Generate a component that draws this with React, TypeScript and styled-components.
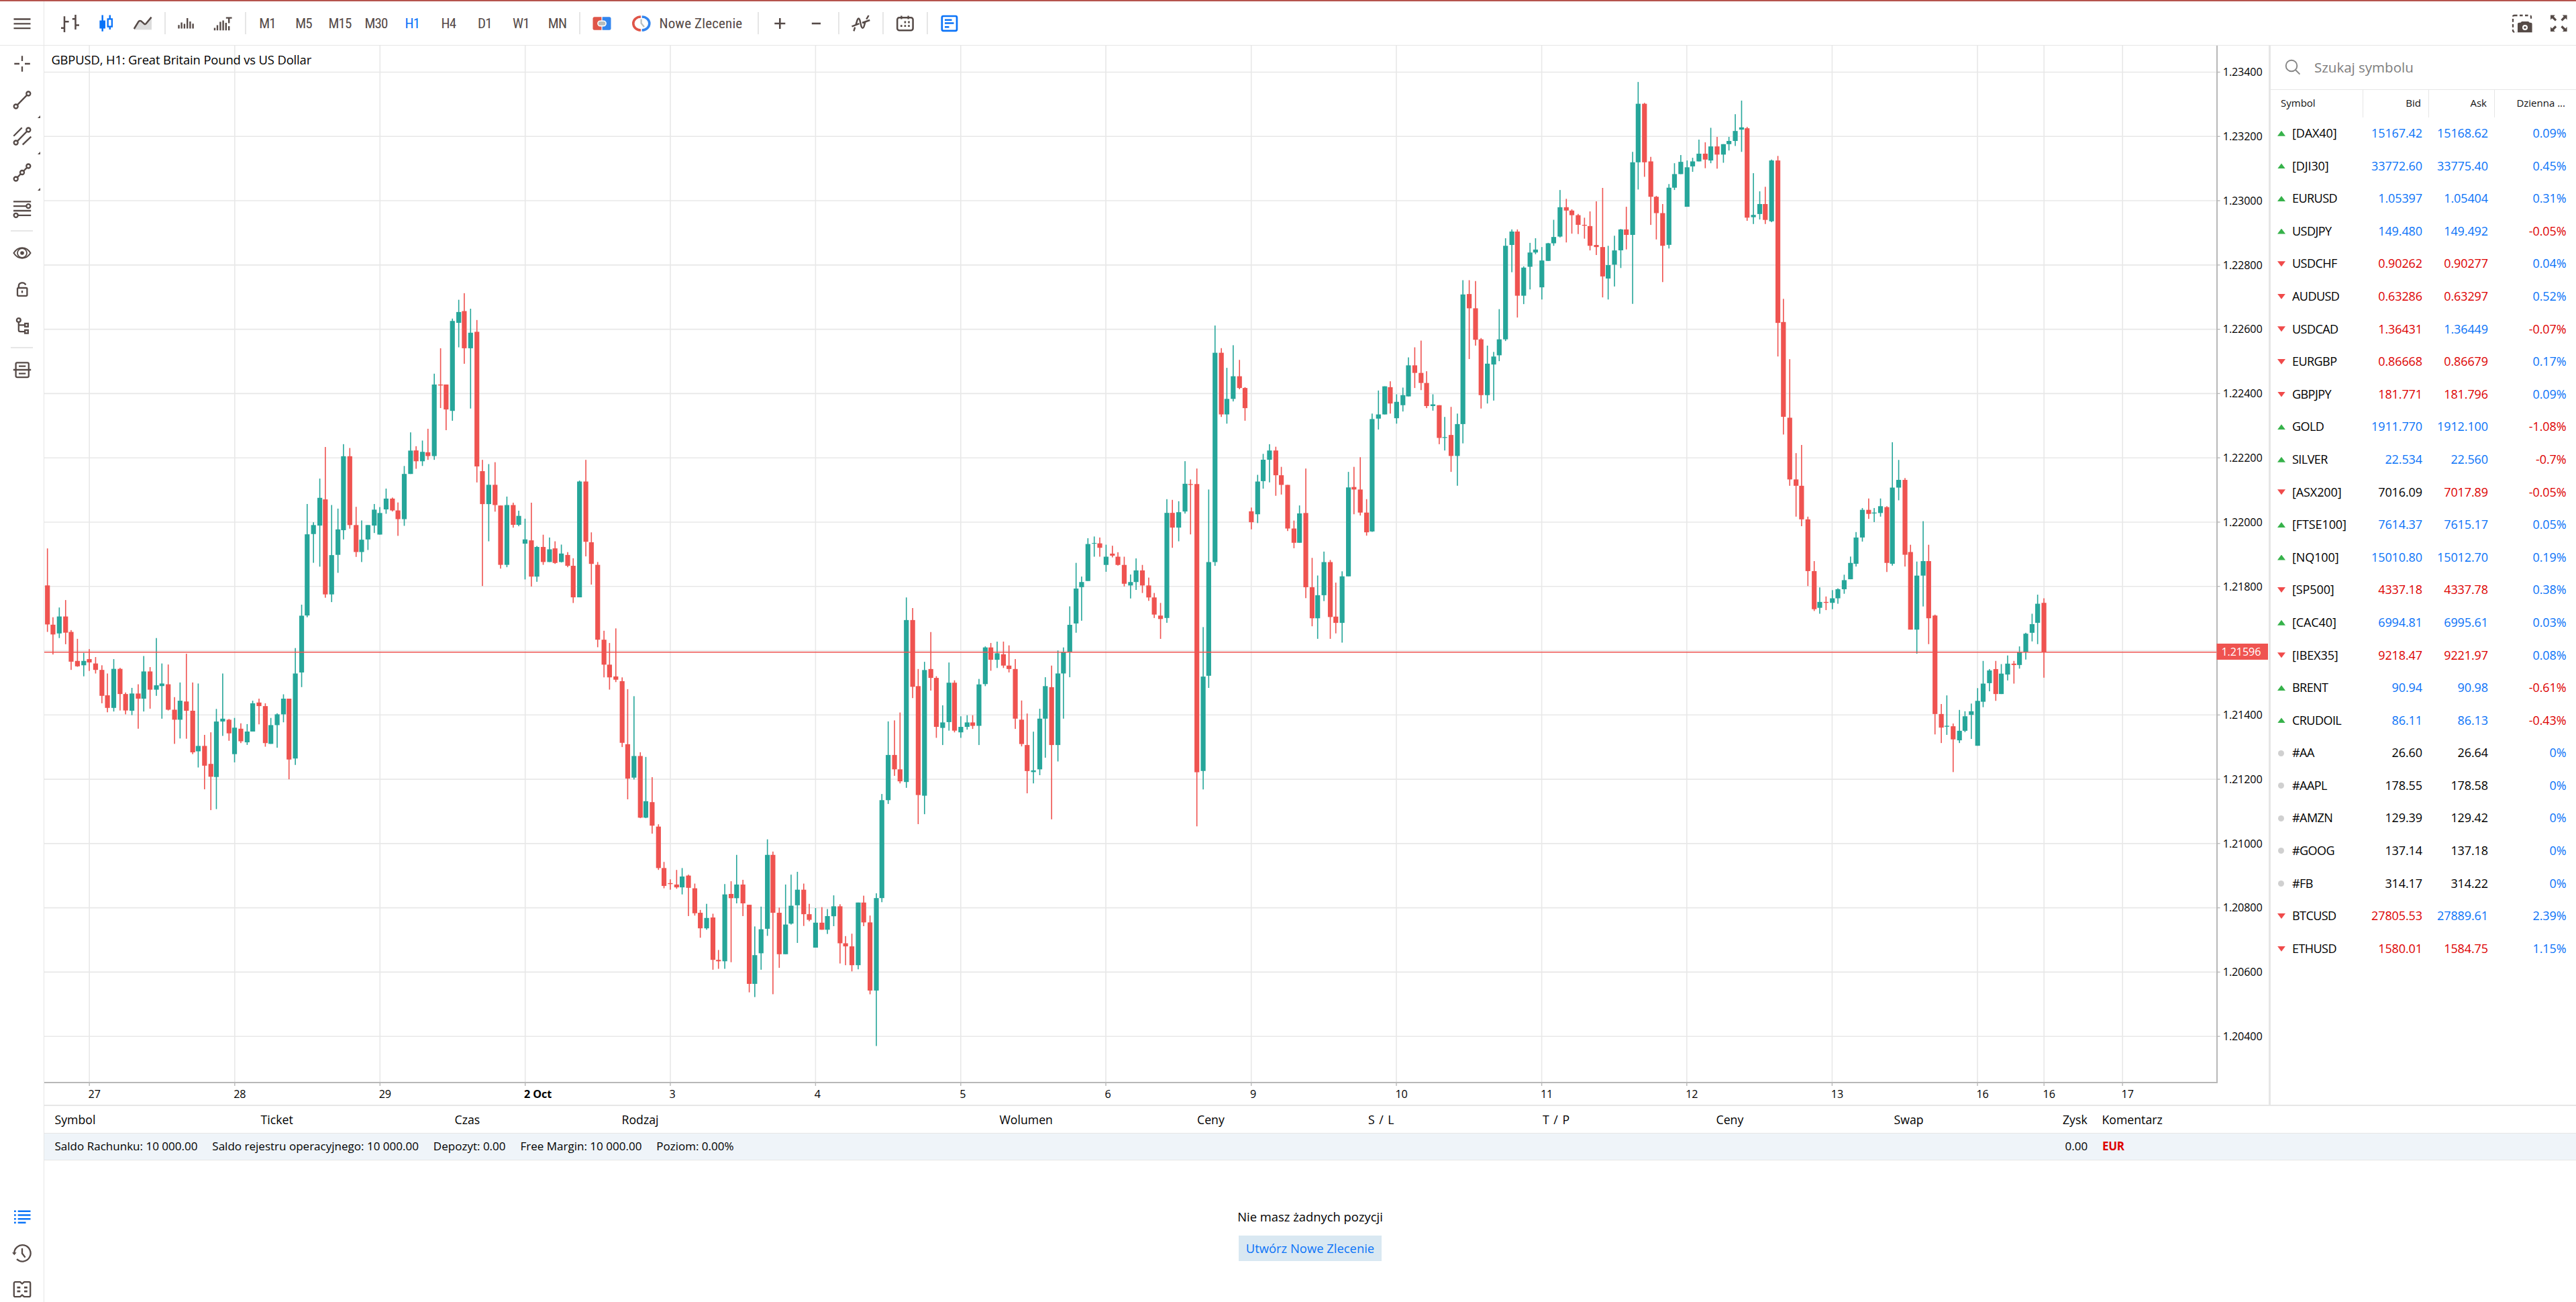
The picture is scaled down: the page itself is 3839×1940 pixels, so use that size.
import React from "react";
import styled, { createGlobalStyle } from "styled-components";

const color = {
  ink: "#554a47",
  blue: "#0a73f8",
  red: "#dd0000",
  up: "#26a69a",
  down: "#ef5350",
  line: "#e6e6e6",
  axis: "#b8b8b8",
};

const GlobalStyle = createGlobalStyle`
  html, body {
    margin: 0;
    background: #fff;
  }

  body {
    font-family: "Open Sans", "Noto Sans", sans-serif;
    color: #000;
    overflow: hidden;
  }
`;

const Page = styled.div`
  display: flex;
  box-sizing: border-box;
  width: 3839px;
  height: 1940px;
  border-top: 2px solid #b5534e;
  overflow: hidden;
`;

const SideBar = styled.nav`
  display: flex;
  flex-direction: column;
  flex: none;
  box-sizing: border-box;
  width: 66px;
  border-right: 1px solid ${color.line};
`;

const MenuCell = styled.div`
  display: flex;
  flex: none;
  align-items: center;
  justify-content: center;
  box-sizing: border-box;
  height: 66px;
  border-bottom: 1px solid ${color.line};
`;

const SideButton = styled.div<{ $menu?: boolean }>`
  position: relative;
  display: flex;
  flex: none;
  align-items: center;
  justify-content: center;
  height: 54px;

  &:after {
    content: "";
    display: ${(props) => (props.$menu ? "block" : "none")};
    position: absolute;
    right: 5px;
    bottom: 0;
    border-left: 4px solid transparent;
    border-bottom: 4px solid ${color.ink};
  }
`;

const SideLine = styled.div`
  flex: none;
  width: 33px;
  height: 2px;
  margin: 5px 16px;
  background: ${color.line};
`;

const SideBottom = styled.div`
  margin: auto 0 -8px;
`;

const Content = styled.div`
  display: flex;
  flex-direction: column;
  flex: 1;
`;

const Toolbar = styled.header`
  display: flex;
  flex: none;
  align-items: center;
  box-sizing: border-box;
  height: 66px;
  padding-left: 11.5px;
  border-bottom: 1px solid ${color.line};
`;

const ToolButton = styled.div<{ $active?: boolean }>`
  display: flex;
  flex: none;
  align-items: center;
  justify-content: center;
  width: 54px;
  font: 370 21px/54px Roboto, sans-serif;
  font-stretch: 75%;
  letter-spacing: -0.8px;
  color: ${(props) => (props.$active ? color.blue : color.ink)};
`;

const OrderButton = styled(ToolButton)`
  justify-content: flex-start;
  box-sizing: border-box;
  width: 200px;
  padding-left: 18px;
  gap: 13px;
  letter-spacing: 0.15px;
`;

const ToolLine = styled.div`
  flex: none;
  width: 2px;
  height: 33px;
  margin: 0 5px;
  background: ${color.line};
`;

const ToolSpace = styled.div`
  flex: 1;
`;

const Main = styled.main`
  display: flex;
  flex: none;
  height: 1578px;
`;

const Quotes = styled.aside`
  flex: 1;
  border-left: 3px solid ${color.line};
`;

const Search = styled.div`
  display: flex;
  align-items: center;
  box-sizing: border-box;
  height: 66px;
  padding: 0 0 1px 21px;
  gap: 20px;
  border-bottom: 1px solid ${color.line};
  font-size: 20.5px;
  color: #7d7d7d;
`;

const QuoteGrid = styled.div`
  display: grid;
  grid-template-columns: 138px 98px 98px 1fr;
`;

const QuoteHead = styled(QuoteGrid)`
  height: 41px;
  font-size: 15px;
  line-height: 38px;
  color: #111;
`;

const HeadCell = styled.div<{ $first?: boolean; $last?: boolean }>`
  padding-left: ${(props) => (props.$first ? "15px" : "0")};
  padding-right: ${(props) => (props.$last ? "16px" : "11px")};
  text-align: ${(props) => (props.$first ? "left" : "right")};
  border-right: ${(props) => (props.$last ? "0" : `1px solid ${color.line}`)};
`;

const QuoteRow = styled(QuoteGrid)`
  height: 48.6px;
  font-size: 18px;
  line-height: 47.6px;
`;

const QuoteName = styled.div<{ $index: boolean }>`
  display: flex;
  align-items: center;
  padding: 0 0 2px 10px;
  gap: 10px;
  letter-spacing: ${(props) => (props.$index ? "-0.1px" : "-0.55px")};
`;

const Value = styled.div<{ $tone: string; $last?: boolean }>`
  padding-right: ${(props) => (props.$last ? "14.5px" : "10px")};
  text-align: right;
  letter-spacing: -0.1px;
  color: ${(props) => tones[props.$tone]};
`;

const Trend = styled.i<{ $dir: string }>`
  flex: none;
  box-sizing: border-box;
  width: ${(props) => (props.$dir === "n" ? "9px" : "12px")};
  height: ${(props) => (props.$dir === "n" ? "9px" : "8px")};
  margin: ${(props) => (props.$dir === "n" ? "0 2px 0 1px" : "0")};
  border-radius: ${(props) => (props.$dir === "n" ? "50%" : "0")};
  background: ${(props) => trendColor[props.$dir]};
  clip-path: ${(props) => trendShape[props.$dir]};
`;

const Positions = styled.section`
  flex: 1;
  border-top: 2px solid ${color.line};
`;

const PositionHead = styled.div`
  display: grid;
  grid-template-columns: 307px 289px 249px 563px 294.5px 255px 260px 258.5px 265px 251.5px 58.5px 1fr;
  height: 40px;
  padding-left: 15.5px;
  border-bottom: 1px solid ${color.line};
  font-size: 17.7px;
  line-height: 40px;
  word-spacing: 2px;
`;

const Summary = styled.div`
  display: flex;
  height: 39px;
  padding-left: 15.5px;
  gap: 21.8px;
  border-bottom: 1px solid ${color.line};
  background: #eff4f9;
  font-size: 17.05px;
  line-height: 38px;
`;

const Profit = styled.span`
  margin-left: auto;
`;

const Currency = styled.b`
  width: 706px;
  color: ${color.red};
  letter-spacing: -0.3px;
`;

const Empty = styled.div`
  display: flex;
  flex-direction: column;
  align-items: center;
  padding-top: 72px;
  font-size: 18.4px;
  line-height: 24px;
`;

const CreateOrder = styled.div`
  width: 213px;
  margin-top: 16px;
  background: #d9e8f2;
  color: ${color.blue};
  line-height: 38px;
  text-align: center;
`;

const Svg = styled.svg<{ $active?: boolean }>`
  flex: none;
  overflow: visible;
  fill: none;
  stroke: ${(props) => (props.$active ? color.blue : color.ink)};
  stroke-width: 2.3;
`;

const ChartSvg = styled.svg`
  flex: none;
  display: block;
  font-family: "Open Sans", "Noto Sans", sans-serif;
`;

const tones: Record<string, string> = {
  b: color.blue,
  r: color.red,
  k: "#000",
};

const trendColor: Record<string, string> = {
  u: "#36b24a",
  d: "#f04a4a",
  n: "#d0d0d0",
};

const trendShape: Record<string, string> = {
  u: "polygon(50% 0, 100% 100%, 0 100%)",
  d: "polygon(0 0, 100% 0, 50% 100%)",
  n: "none",
};

// trend, symbol, bid, ask, daily change, tone of each value
const quotes = [
  ["u", "[DAX40]", "15167.42", "15168.62", "0.09%", "bbb"],
  ["u", "[DJI30]", "33772.60", "33775.40", "0.45%", "bbb"],
  ["u", "EURUSD", "1.05397", "1.05404", "0.31%", "bbb"],
  ["u", "USDJPY", "149.480", "149.492", "-0.05%", "bbr"],
  ["d", "USDCHF", "0.90262", "0.90277", "0.04%", "rrb"],
  ["d", "AUDUSD", "0.63286", "0.63297", "0.52%", "rrb"],
  ["d", "USDCAD", "1.36431", "1.36449", "-0.07%", "rbr"],
  ["d", "EURGBP", "0.86668", "0.86679", "0.17%", "rrb"],
  ["d", "GBPJPY", "181.771", "181.796", "0.09%", "rrb"],
  ["u", "GOLD", "1911.770", "1912.100", "-1.08%", "bbr"],
  ["u", "SILVER", "22.534", "22.560", "-0.7%", "bbr"],
  ["d", "[ASX200]", "7016.09", "7017.89", "-0.05%", "krr"],
  ["u", "[FTSE100]", "7614.37", "7615.17", "0.05%", "bbb"],
  ["u", "[NQ100]", "15010.80", "15012.70", "0.19%", "bbb"],
  ["d", "[SP500]", "4337.18", "4337.78", "0.38%", "rrb"],
  ["u", "[CAC40]", "6994.81", "6995.61", "0.03%", "bbb"],
  ["d", "[IBEX35]", "9218.47", "9221.97", "0.08%", "rrb"],
  ["u", "BRENT", "90.94", "90.98", "-0.61%", "bbr"],
  ["u", "CRUDOIL", "86.11", "86.13", "-0.43%", "bbr"],
  ["n", "#AA", "26.60", "26.64", "0%", "kkb"],
  ["n", "#AAPL", "178.55", "178.58", "0%", "kkb"],
  ["n", "#AMZN", "129.39", "129.42", "0%", "kkb"],
  ["n", "#GOOG", "137.14", "137.18", "0%", "kkb"],
  ["n", "#FB", "314.17", "314.22", "0%", "kkb"],
  ["d", "BTCUSD", "27805.53", "27889.61", "2.39%", "rbb"],
  ["d", "ETHUSD", "1580.01", "1584.75", "1.15%", "rrb"],
];

const periods = ["M1", "M5", "M15", "M30", "H1", "H4", "D1", "W1", "MN"];

const positionColumns = [
  "Symbol",
  "Ticket",
  "Czas",
  "Rodzaj",
  "Wolumen",
  "Ceny",
  "S / L",
  "T / P",
  "Ceny",
  "Swap",
  "Zysk",
  "Komentarz",
];

const summary = [
  "Saldo Rachunku: 10 000.00",
  "Saldo rejestru operacyjnego: 10 000.00",
  "Depozyt: 0.00",
  "Free Margin: 10 000.00",
  "Poziom: 0.00%",
];

const days: Array<[number, string, boolean?]> = [
  [133.2, "27"],
  [349.8, "28"],
  [566.3, "29"],
  [782.7, "2 Oct", true],
  [999, "3"],
  [1215.4, "4"],
  [1431.8, "5"],
  [1648, "6"],
  [1864.7, "9"],
  [2081, "10"],
  [2297.6, "11"],
  [2513.8, "12"],
  [2730.4, "13"],
  [2947, "16"],
  [3046.2, "16"],
  [3163.2, "17"],
];

const prices = Array.from({ length: 16 }, (_, i) => ({
  label: (1.234 - i * 0.002).toFixed(5),
  y: 107.5 + i * 95.78,
}));

// Hourly bars, split into runs that share a base and a step.
// Each bar: direction, high, body top, body bottom, low.
const runs = [
  {
    base: 640,
    step: 0.38265,
    bars:
      "r463,607,759,788 r731,760,798,876 g693,728,794,812 r664,728,791,836 r781,788,904,936 r815,901,922,924 g870,901,918,961 r855,894,907,940 r886,911,936,950 r918,936,1037,1066 " +
      "r950,1035,1084,1101 g894,932,1084,1098 r928,932,1030,1094 r1024,1030,1094,1109 g1006,1028,1095,1112 r992,1028,1048,1165 g882,942,1048,1098 r925,942,1013,1087 g812,996,1013,1037 g911,989,999,1126 " +
      "r915,992,1091,1094 r1042,1091,1130,1224 g985,1056,1130,1203 r873,1059,1095,1204 r985,1095,1257,1264 g989,1232,1253,1316 r1189,1232,1309,1401 r1179,1302,1352,1482 g1088,1137,1353,1478 g950,1126,1137,1193 " +
      "r1127,1130,1183,1212 g1123,1161,1264,1296 r1144,1165,1214,1221 g1147,1176,1218,1228 g1056,1066,1176,1176 r1048,1063,1077,1148 r1066,1077,1221,1235 g1123,1151,1224,1224 g1105,1109,1151,1239 g1031,1048,1109,1140 " +
      "r1048,1048,1285,1362 g851,950,1281,1306 g682,725,946,1003 g290,408,724,731 g361,372,407,519 g191,266,374,534 r68,272,642,655 g294,489,642,672 g308,389,488,558 g57,104,392,428 " +
      "r72,104,372,386 r301,372,477,496 g354,429,477,516 g372,372,428,469 g290,312,374,403 g302,325,409,409 g230,269,311,328 r265,269,315,319 r284,315,349,414 g142,173,349,375 g11,82,173,173",
  },
  {
    base: 420,
    step: 0.70153,
    bars:
      "r349,358,381,397 g337,361,381,391 r312,362,370,378 g195,218,370,378 r141,218,220,268 r218,218,271,315 g78,83,274,295 g38,64,87,139 r24,62,141,174 g57,108,141,269 " +
      "r81,106,392,426 r378,402,472,646 g387,431,472,551 r383,431,474,488 r475,475,601,609 g456,474,601,606 r469,474,516,522 g486,497,516,519 g503,547,556,632 r469,549,626,647 " +
      "g561,563,626,637 r537,563,595,601 g543,568,595,595 r551,566,597,599 g558,577,595,596 r574,580,603,606 r587,603,670,682 g422,424,670,670 r378,424,552,583 r532,553,599,643 " +
      "r595,601,760,776 r741,760,813,840 r767,813,840,866 r736,838,845,850 r840,848,979,988 r865,982,1055,1099 g880,1007,1053,1057 r999,1007,1138,1139 g1009,1103,1138,1139 r1052,1105,1155,1172 " +
      "r1152,1157,1245,1249 r1232,1245,1283,1288 r1269,1277,1279,1291 r1249,1280,1286,1289 g1245,1263,1286,1301 r1259,1261,1287,1347 r1278,1288,1341,1346 r1334,1340,1373,1393 g1321,1351,1373,1376 r1342,1350,1440,1461 " +
      "r1419,1440,1443,1459 g1279,1301,1443,1459 r1273,1300,1309,1445 g1217,1280,1309,1320 r1270,1280,1320,1347 r1323,1323,1491,1509 g1369,1430,1491,1519 g1327,1375,1426,1461 g1184,1217,1374,1389 r1210,1217,1340,1513 " +
      "r1329,1340,1428,1457 g1280,1365,1428,1428 g1259,1325,1363,1365 g1253,1291,1324,1404 r1278,1291,1343,1368 r1321,1343,1355,1358 g1330,1361,1414,1414 r1328,1361,1376,1376 g1332,1347,1376,1385",
  },
  {
    base: 780,
    step: 0.5102,
    bars:
      "g1086,1118,1147,1176 r1112,1118,1226,1285 r1205,1226,1235,1290 r1198,1235,1290,1308 g1107,1107,1290,1302 r1087,1107,1165,1176 r1145,1165,1364,1375 g1080,1094,1364,1526 g790,808,1094,1106 g578,676,808,819 " +
      "r575,676,718,737 r552,718,753,759 g216,282,755,772 r247,282,477,510 r425,475,793,878 g404,428,795,849 r317,425,451,488 r446,451,594,626 g531,581,597,647 g406,465,580,605 " +
      "r458,465,605,610 g563,594,610,626 g560,581,594,602 r560,581,591,600 g454,470,591,647 g359,362,469,475 r349,362,398,430 g345,379,398,422 r345,382,415,422 r356,415,425,435 " +
      "r396,425,570,600 r517,573,644,651 r555,647,723,788 g608,721,726,759 g541,570,718,735 g449,475,570,684 r415,478,647,864 g371,438,647,695 g362,376,438,570 g242,296,376,449 " +
      "g115,190,292,319 g155,171,186,284 g43,60,168,168 g38,57,59,97 r41,58,71,97 g62,97,121,141 r65,88,94,99 r84,97,121,123 r97,121,176,184 g149,171,181,219 " +
      "g102,137,171,194 r121,137,181,203 r158,181,216,226 r203,216,266,276 r232,269,279,337 g-71,-31,276,290 r-69,-31,12,71 g-65,-33,12,52 g-182,-116,-35,-29",
  },
  {
    base: 270,
    step: 0.625,
    bars:
      "r711,722,724,842 r685,722,1409,1538 g1063,1181,1406,1450 g735,908,1179,1208 g344,409,908,917 r398,409,556,562 g445,519,556,578 g391,465,519,525 r426,465,493,496 r491,493,541,571 " +
      "r778,787,813,830 g700,716,794,815 g650,664,715,733 g627,642,664,718 r633,642,701,750 r681,701,724,747 r724,724,828,834 r809,828,862,875 g773,792,862,862 r685,791,968,994 " +
      "r898,968,1042,1061 g940,987,1042,1091 g883,908,987,1001 r903,908,1039,1091 r957,1038,1053,1078 g930,942,1053,1100 g693,730,942,942 r681,729,735,794 r658,735,790,797 r758,790,837,845 " +
      "g554,567,835,836 g499,556,566,592 g489,489,556,556 r477,491,530,554 g508,526,565,578 g492,510,534,549 g420,439,513,513 r396,439,457,493 r380,457,481,498 r453,481,536,541 " +
      "g508,532,536,547 r534,534,612,627 g562,610,612,642 r538,605,655,693 g554,579,655,726 g236,270,579,625 r236,269,303,424 r238,303,378,392 r374,377,510,542 g392,435,510,530 " +
      "g407,418,437,523 g305,377,415,429 g136,154,377,381 g115,120,152,217 r115,120,273,325 g203,206,273,293 g147,170,204,258 g136,163,170,174 g157,189,253,282 g147,148,190,190 " +
      "g92,133,148,154 g21,62,132,134 r42,62,70,146 r67,70,81,125 r78,81,104,126 r87,104,106,137 r72,107,154,165 r48,152,157,176 r16,157,227,277 g154,200,232,282 g130,165,199,251",
  },
  {
    base: 110,
    step: 0.67602,
    bars:
      "g342,343,389,428 r293,343,355,387 g172,195,355,507 g18,66,195,255 r64,66,195,227 r183,193,271,333 r269,271,307,365 r287,307,379,459 g243,251,377,385 g197,221,251,256 " +
      "g179,194,221,221 g191,206,293,293 g185,193,204,216 g145,176,193,193 r151,176,189,208 g119,160,191,197 r139,160,178,209 g155,155,178,196 g139,148,155,169 g89,126,148,159 " +
      "g59,118,123,172 r117,120,317,324 g219,311,316,331 g259,287,309,321 r249,287,322,331 g189,191,325,327 r181,191,549,623 r496,547,756,795 r629,758,894,908 r836,894,908,976 " +
      "r818,908,982,997 r976,982,1096,1129 r1074,1096,1180,1184 g1132,1164,1177,1190 r1152,1164,1166,1182 g1138,1156,1166,1180 g1134,1136,1156,1168 g1104,1116,1136,1146 g1064,1078,1114,1114 g1010,1022,1080,1086 " +
      "g957,961,1022,1031 r936,961,970,981 g957,967,969,988 g936,953,968,976 r953,955,1078,1098 g812,912,1080,1084 g851,895,912,940 r891,895,1060,1086 r1038,1054,1225,1225 g1075,1106,1225,1278 " +
      "g986,1074,1106,1174 r1038,1074,1200,1257 r1192,1194,1411,1456 r1389,1411,1441,1475 g1370,1437,1439,1457 r1432,1438,1467,1539 g1402,1448,1469,1475 g1405,1416,1448,1451 g1388,1405,1413,1466 g1354,1382,1481,1481 " +
      "g1294,1344,1384,1396 g1312,1315,1343,1361 r1294,1312,1367,1382 g1301,1322,1367,1367 g1282,1300,1324,1337 r1294,1300,1303,1344 g1262,1275,1303,1311 g1232,1234,1274,1291 g1190,1213,1232,1251 g1148,1168,1210,1257 r1156,1166,1275,1331",
  },
];

const candles = runs.flatMap(({ base, step, bars }) =>
  bars.split(" ").map((bar) => {
    const [high, top, bottom, low] = bar
      .slice(1)
      .split(",")
      .map((v) => base + Number(v) * step);
    return { up: bar[0] === "g", high, top, bottom, low };
  })
);

const barX = (i: number) => 70.7 + 1.1765 * Math.floor(7.665 * i + 0.1);

function Chart() {
  return (
    <ChartSvg width="3315" height="1578" viewBox="66 68 3315 1578">
      <g stroke="#e8e8e8" strokeWidth="1.6">
        {prices.map((p) => (
          <path key={p.label} d={`M66 ${p.y}H3303`} />
        ))}
        {days.map(([x], i) => (
          <path key={i} d={`M${x} 68V1612`} />
        ))}
      </g>
      {candles.map((c, i) => (
        <g key={i} fill={c.up ? color.up : color.down}>
          <rect x={barX(i) - 0.8} y={c.high} width="1.6" height={c.low - c.high} />
          <rect
            x={barX(i) - 3.6}
            y={c.top}
            width="7.2"
            height={Math.max(c.bottom - c.top, 1)}
          />
        </g>
      ))}
      <path d="M66 971.8H3304" stroke="#ef5350" strokeWidth="1.4" />
      <g stroke={color.axis}>
        <path d="M3304 68V1614M66 1613H3305" strokeWidth="2" fill="none" />
        {prices.map((p) => (
          <path key={p.label} d={`M3304 ${p.y}H3308.5`} strokeWidth="1.4" />
        ))}
        {days.map(([x], i) => (
          <path key={i} d={`M${x} 1613V1618`} strokeWidth="1.4" />
        ))}
      </g>
      <g fontSize="16.2" fill="#000" letterSpacing="-0.15">
        {prices.map((p) => (
          <text key={p.label} x="3312.8" y={p.y + 5.8}>
            {p.label}
          </text>
        ))}
        {days.map(([x, label, bold], i) => (
          <text key={i} x={x - 1.6} y="1635.6" fontWeight={bold ? 700 : 500}>
            {label}
          </text>
        ))}
      </g>
      <rect x="3303.5" y="959" width="76.5" height="24" fill="#ef5350" />
      <text x="3310.5" y="977" fontSize="16.2" fill="#fff" letterSpacing="-0.15">
        1.21596
      </text>
      <text x="76.4" y="95.8" fontSize="18.4" letterSpacing="-0.14">
        GBPUSD, H1: Great Britain Pound vs US Dollar
      </text>
    </ChartSvg>
  );
}

type IconProps = {
  active?: boolean;
  children: React.ReactNode;
};

function Icon({ active, children }: IconProps) {
  return (
    <Svg width="28" height="28" viewBox="0 0 28 28" $active={active}>
      {children}
    </Svg>
  );
}

function SideTools() {
  return (
    <SideBar>
      <MenuCell>
        <Icon>
          <path d="M1.5 7.5H26.5M1.5 14.3H26.5M1.5 21.2H26.5" />
        </Icon>
      </MenuCell>
      <SideButton>
        <Icon>
          <path d="M2.3 14H10M18 14H25.8M14 2.2V10M14 18V25.8" />
        </Icon>
      </SideButton>
      <SideButton $menu>
        <Icon>
          <circle cx="23.3" cy="4.5" r="3" />
          <circle cx="4.7" cy="23.5" r="3" />
          <path d="M6.8 21.4L21.2 6.6" />
        </Icon>
      </SideButton>
      <SideButton $menu>
        <Icon>
          <circle cx="23.3" cy="4.5" r="3" />
          <circle cx="4.7" cy="23.5" r="3" />
          <path d="M6.8 21.4L21.2 6.6M1.3 13.7L13.7 1.3M14.7 26.7L27.3 14.7" />
        </Icon>
      </SideButton>
      <SideButton $menu>
        <Icon>
          <circle cx="23.3" cy="4.5" r="3" />
          <circle cx="14" cy="14" r="3" />
          <circle cx="4.7" cy="23.5" r="3" />
          <path d="M6.8 21.4L11.8 16.3M16.2 11.7L21.2 6.6" />
        </Icon>
      </SideButton>
      <SideButton>
        <Icon>
          <path d="M1 3.4H27.2M1 10.1H20M1 17H27.2M8 23.8H27.2" />
          <circle cx="23.3" cy="10.1" r="3" />
          <circle cx="4.7" cy="23.8" r="3" />
        </Icon>
      </SideButton>
      <SideLine />
      <SideButton>
        <Icon>
          <path d="M1.5 14C8 3.8 20 3.8 26.5 14C20 24.2 8 24.2 1.5 14Z" strokeWidth="2" />
          <circle cx="14" cy="14" r="7" strokeWidth="1.8" />
          <circle cx="14" cy="14" r="2.8" fill={color.ink} stroke="none" />
        </Icon>
      </SideButton>
      <SideButton>
        <Icon>
          <rect x="7" y="12" width="14.4" height="11.8" rx="1.5" />
          <path d="M8.8 12V9.5C8.8 3.6 17 2.6 19.3 7.4M14 16V19.5" />
        </Icon>
      </SideButton>
      <SideButton>
        <Icon>
          <circle cx="8.8" cy="6" r="2.9" />
          <path d="M8.8 9V20.5Q8.8 23.2 11.5 23.2H18M8.8 13.4H18" />
          <rect x="18.2" y="11" width="4.6" height="4.8" />
          <rect x="18.2" y="20.8" width="4.6" height="4.8" />
        </Icon>
      </SideButton>
      <SideLine />
      <SideButton>
        <Icon>
          <rect x="4.6" y="3.3" width="19.2" height="21.8" rx="2" />
          <path d="M.8 14H27.2M9 8.7H19.3M9 19.6H19.3" />
        </Icon>
      </SideButton>
      <SideBottom>
        <SideButton>
          <Icon active>
            <path
              d="M2 5.7H4.8M7.7 5.7H26.5M2 11.5H4.8M7.7 11.5H26.5M2 17.2H4.8M7.7 17.2H26.5M2 22.7H4.8M7.7 22.7H19.5"
              strokeWidth="2.6"
            />
          </Icon>
        </SideButton>
        <SideButton>
          <Icon>
            <path d="M2.2 15A12.2 12.2 0 1 1 6 23.2M14 7V14.5L18.6 20.6" />
            <path d="M-1 13.2H5.6L2.3 17.2Z" fill={color.ink} stroke="none" />
          </Icon>
        </SideButton>
        <SideButton>
          <Icon>
            <path d="M11 3.2H3.8Q1.8 3.2 1.8 5.2V23.2Q1.8 25.2 3.8 25.2H11L14 22.6L17 25.2H24.2Q26.2 25.2 26.2 23.2V5.2Q26.2 3.2 24.2 3.2H17L14 5.8L11 3.2Z" />
            <path d="M6.5 11.3H11.3M17 11.3H21.8M6.5 17.2H11.3M17 17.2H21.8" strokeWidth="2.8" />
          </Icon>
        </SideButton>
      </SideBottom>
    </SideBar>
  );
}

function TopTools() {
  return (
    <Toolbar>
      <ToolButton>
        <Icon>
          <path
            d="M5 3.2V27M0 20.8H5M5 11.2H11.6M21.5 1V23M16.8 7.2H21.5M21.5 16.4H27"
            strokeWidth="2.5"
          />
        </Icon>
      </ToolButton>
      <ToolButton>
        <Icon active>
          <path d="M7.7 1.5V25.8M18.8 1.5V7.4M18.8 18.8V23" strokeWidth="2.5" />
          <rect x="3.4" y="9.5" width="8.6" height="12" fill={color.blue} stroke="none" />
          <rect x="15.7" y="7.4" width="6.2" height="11.2" />
        </Icon>
      </ToolButton>
      <ToolButton>
        <Icon>
          <path
            d="M.8 22L7 11.8Q9.5 8 13 11.8L15.8 14.4Q17.6 15.8 19 14L27 5V23.2H.8Z"
            fill="#dcdcdc"
            stroke="none"
          />
          <path
            d="M.8 22L7 11.8Q9.5 8 13 11.8L15.8 14.4Q17.6 15.8 19 13.8L26.6 4.6"
            strokeWidth="2.5"
          />
        </Icon>
      </ToolButton>
      <ToolLine />
      <ToolButton>
        <Icon>
          <path
            d="M1.5 21.5V16.2M5.6 21.5V12.5M9.9 21.5V14.5M14.2 21.5V6M18.4 21.5V11M22.6 21.5V14.2"
            strokeWidth="2.4"
          />
        </Icon>
      </ToolButton>
      <ToolButton>
        <Icon>
          <path
            d="M1 24.3V20.5M5 24.3V16.5M9.4 24.3V11.5M13.6 24.3V9.5M17.8 24.3V13M22.2 24.3V18M22.2 5V13.5M17.8 5.6H26.6"
            strokeWidth="2.4"
          />
        </Icon>
      </ToolButton>
      <ToolLine />
      {periods.map((period) => (
        <ToolButton key={period} $active={period === "H1"}>
          {period}
        </ToolButton>
      ))}
      <ToolLine />
      <ToolButton>
        <Icon>
          <path d="M13.4 4.2H3Q.5 4.2 .5 6.7V21.2Q.5 23.7 3 23.7H13.4Z" fill="#df5548" stroke="none" />
          <path d="M14.6 4.2H25Q27.5 4.2 27.5 6.7V21.2Q27.5 23.7 25 23.7H14.6Z" fill="#3285ee" stroke="none" />
          <rect x="8" y="10.2" width="12" height="7.4" rx="3.4" fill="#b5bcbe" stroke="#fff" strokeWidth="1.6" />
        </Icon>
      </ToolButton>
      <OrderButton>
        <Icon>
          <path d="M13 4A11.2 10 0 0 0 13 24" stroke="#df5548" strokeWidth="3.6" />
          <path d="M14.6 4A11.2 10 0 0 1 14.6 24" stroke="#3285ee" strokeWidth="3.6" />
          <path d="M13.6 7.6V13.6L18 19" stroke="#b5bcbe" strokeWidth="2.2" />
        </Icon>
        Nowe Zlecenie
      </OrderButton>
      <ToolLine />
      <ToolButton>
        <Icon>
          <path d="M5.3 14H21.3M13.3 6V22" strokeWidth="2.6" />
        </Icon>
      </ToolButton>
      <ToolButton>
        <Icon>
          <path d="M6.8 14H20" strokeWidth="2.6" />
        </Icon>
      </ToolButton>
      <ToolLine />
      <ToolButton>
        <Icon>
          <path
            d="M.5 18.4L11.5 14.2M16 13L27.3 9M3.4 25.4L5.2 19.6M6.6 15.6L8.6 9Q10.6 4 12.4 9L14.6 18.4Q16.6 23.4 18.6 18.4L20.4 12M22.2 7.6L25.6 2"
            strokeWidth="2.4"
          />
        </Icon>
      </ToolButton>
      <ToolLine />
      <ToolButton>
        <Icon>
          <rect x="2.2" y="5.2" width="23.4" height="19" rx="3" strokeWidth="2.5" />
          <path d="M8.4 2.6V7.6M18.6 2.6V7.6" />
          <path
            d="M12.6 12H15.2M18.2 12H20.8M7 17.6H9.6M12.6 17.6H15.2M18.2 17.6H20.8"
            strokeWidth="2.8"
          />
        </Icon>
      </ToolButton>
      <ToolLine />
      <ToolButton>
        <Icon active>
          <rect x="2.8" y="3" width="22.2" height="21.8" rx="2" strokeWidth="2.7" />
          <path d="M7 8.7H17.5M7 13.6H20.5M7 19.2H13.5" strokeWidth="2.5" />
        </Icon>
      </ToolButton>
      <ToolSpace />
      <ToolButton>
        <Icon>
          <rect x="1" y="2" width="27" height="24.6" rx="2" strokeDasharray="4.6 3.4" />
          <path d="M6.5 10H30V28H6.5Z" fill="#fff" stroke="none" />
          <path
            d="M8 14.8Q8 12.8 10 12.8H12.2L14.2 11H24L26 12.8H27.6Q29.6 12.8 29.6 14.8V27.3H8Z"
            fill={color.ink}
            stroke="none"
          />
          <circle cx="19" cy="20" r="2.9" stroke="#fff" strokeWidth="2.2" />
        </Icon>
      </ToolButton>
      <ToolButton>
        <Icon>
          <path
            d="M3 1.6H9.8L7.9 3.7L12.2 8.2L10 10.6L5.3 6.2L3 8.6ZM27.6 1.6V8.6L25.3 6.2L20.6 10.6L18.4 8.2L22.7 3.7L20.8 1.6ZM3 26V19L5.3 21.4L10 17L12.2 19.4L7.9 23.9L9.8 26ZM27.6 26H20.8L22.7 23.9L18.4 19.4L20.6 17L25.3 21.4L27.6 19Z"
            fill={color.ink}
            stroke="none"
          />
        </Icon>
      </ToolButton>
    </Toolbar>
  );
}

function QuoteList() {
  return (
    <Quotes>
      <Search>
        <svg width="24" height="24" viewBox="0 0 24 24" fill="none" stroke="#858585" strokeWidth="1.9">
          <circle cx="10" cy="10" r="8.3" />
          <path d="M15.8 16L22.4 22.6" />
        </svg>
        Szukaj symbolu
      </Search>
      <QuoteHead>
        <HeadCell $first>Symbol</HeadCell>
        <HeadCell>Bid</HeadCell>
        <HeadCell>Ask</HeadCell>
        <HeadCell $last>Dzienna ...</HeadCell>
      </QuoteHead>
      {quotes.map(([trend, name, bid, ask, change, tone]) => (
        <QuoteRow key={name}>
          <QuoteName $index={name[0] === "["}>
            <Trend $dir={trend} />
            {name}
          </QuoteName>
          <Value $tone={tone[0]}>{bid}</Value>
          <Value $tone={tone[1]}>{ask}</Value>
          <Value $tone={tone[2]} $last>
            {change}
          </Value>
        </QuoteRow>
      ))}
    </Quotes>
  );
}

function PositionList() {
  return (
    <Positions>
      <PositionHead>
        {positionColumns.map((title, index) => (
          <span key={`column-${index}`}>{title}</span>
        ))}
      </PositionHead>
      <Summary>
        {summary.map((item) => (
          <span key={item}>{item}</span>
        ))}
        <Profit>0.00</Profit>
        <Currency>EUR</Currency>
      </Summary>
      <Empty>
        Nie masz żadnych pozycji
        <CreateOrder>Utwórz Nowe Zlecenie</CreateOrder>
      </Empty>
    </Positions>
  );
}

function App() {
  return (
    <Page>
      <GlobalStyle />
      <SideTools />
      <Content>
        <TopTools />
        <Main>
          <Chart />
          <QuoteList />
        </Main>
        <PositionList />
      </Content>
    </Page>
  );
}

export default App;
